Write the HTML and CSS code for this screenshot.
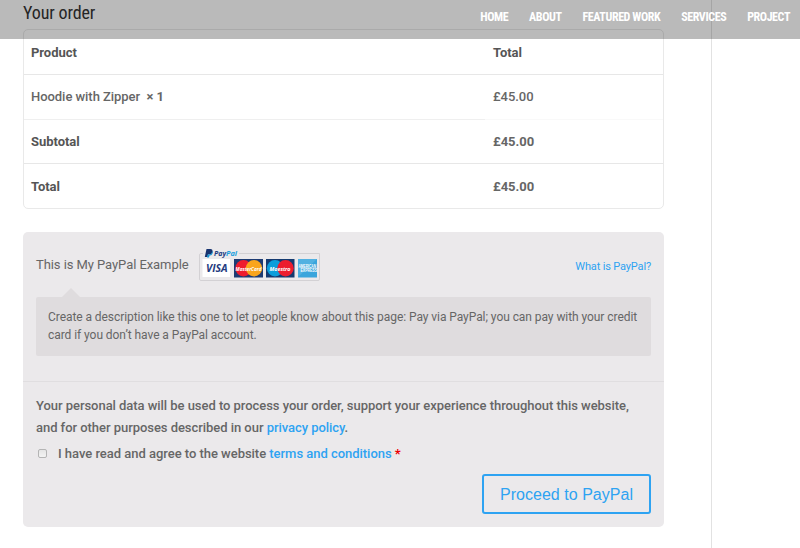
FILE: index.html
```html
<!DOCTYPE html>
<html lang="en">
<head>
<meta charset="utf-8">
<title>Checkout</title>
<link rel="stylesheet" href="styles.css">
</head>
<body>
<header class="site-header">
  <nav class="nav"><a>HOME</a><a>ABOUT</a><a>FEATURED WORK</a><a>SERVICES</a><a>PROJECT</a></nav>
</header>
<div class="page">
  <main class="content">
    <h3 class="heading"><span>Your order</span></h3>
    <div class="order">
      <div class="row head"><span>Product</span><span>Total</span></div>
      <div class="row item"><span>Hoodie with Zipper&nbsp; <b>× 1</b></span><span class="price">£45.00</span></div>
      <div class="row subtotal"><span>Subtotal</span><span class="price">£45.00</span></div>
      <div class="row total"><span>Total</span><span class="price">£45.00</span></div>
    </div>
    <section class="payment">
      <div class="methods">
        <div class="method">
          <span class="method-name">This is My PayPal Example</span>
          <svg class="cards" width="122" height="34" viewBox="0 0 122 34">
            <path d="M4 5.500H2Q.5 5.500 .5 7V31Q.5 32.500 2 32.500H119Q120.500 32.500 120.500 31V5.500H40" fill="none" stroke="#d3d1d4"/>
            <path d="M7.500 1H11.500Q14 1 13.500 4Q13 6.500 10 6.500H9L8.500 9H5.800Z" fill="#17336f"/>
            <path d="M13.300 3Q14.300 4 13.300 6Q12.500 7.500 10.500 7.500L10 9.500H8L8.700 6.500H10Q12.700 6.500 13.300 3Z" fill="#1595d3"/>
            <text class="brand" x="15" y="8" textLength="12" lengthAdjust="spacingAndGlyphs" fill="#213b80">Pay</text>
            <text class="brand" x="27" y="8" textLength="11" lengthAdjust="spacingAndGlyphs" fill="#1aa0dd">Pal</text>
            <rect x="3.500" y="11" width="27.500" height="18" fill="#fff"/>
            <text class="visa" x="7" y="23.500" textLength="21.500" lengthAdjust="spacingAndGlyphs">VISA</text>
            <rect x="35" y="11" width="29" height="18.500" fill="#1d3b73"/>
            <circle cx="44.500" cy="20.300" r="8.200" fill="#ee1c2e"/>
            <circle cx="55" cy="20.300" r="8.200" fill="#faa51c"/>
            <text class="card-name" x="36.500" y="22.500" textLength="26" lengthAdjust="spacingAndGlyphs">MasterCard</text>
            <rect x="67" y="11" width="28.500" height="18.500" fill="#143a70"/>
            <circle cx="76" cy="20.300" r="8.200" fill="#0b9edb"/>
            <circle cx="86.500" cy="20.300" r="8.200" fill="#ec1c2e"/>
            <text class="card-name" x="70.500" y="22.500" textLength="21" lengthAdjust="spacingAndGlyphs">Maestro</text>
            <rect x="99" y="11" width="19" height="18.500" fill="#3aa5dc"/>
            <path d="M99 11H118L99 29Z" fill="#65bce6" opacity=".55"/>
            <text class="amex" x="99.500" y="20" textLength="17.500" lengthAdjust="spacingAndGlyphs">AMERICAN</text>
            <text class="amex" x="101.500" y="24" textLength="16.500" lengthAdjust="spacingAndGlyphs">EXPRESS</text>
          </svg>
          <a class="about"><span>What is PayPal?</span></a>
        </div>
        <div class="description"><p>Create a description like this one to let people know about this page: Pay via PayPal; you can pay with your credit</p><p>card if you don’t have a PayPal account.</p></div>
      </div>
      <div class="place">
        <p class="privacy"><span>Your personal data will be used to process your order, support your experience throughout this website,</span><br><span>and for other purposes described in our <a>privacy policy</a>.</span></p>
        <label class="terms"><i class="checkbox"></i><span>I have read and agree to the website <a>terms and conditions</a> <em>*</em></span></label>
        <button class="pay">Proceed to PayPal</button>
      </div>
    </section>
  </main>
</div>
</body>
</html>
```
FILE: styles.css
```css
* { box-sizing: border-box; }
body { margin: 0; width: 800px; height: 548px; overflow: hidden; background: #fff; color: #666; font: 500 13px/22px Roboto, sans-serif; letter-spacing: -.045px; }
p { margin: 0; }
a { color: #2ea3f2; }
.site-header { position: absolute; inset: 0 0 auto; height: 39px; z-index: 2; background: rgba(0, 0, 0, .27); }
.nav { display: flex; justify-content: flex-end; gap: 20.900px; padding: 6px 10px 0 0; font: 700 12px/22px "Roboto Condensed", Roboto, sans-serif; font-stretch: condensed; letter-spacing: -.4px; }
.nav a { color: #fff; white-space: nowrap; }
.page { width: 712px; height: 548px; border-right: 1px solid #e2e2e2; padding-left: 23px; }
.content { width: 641px; }
.heading { margin: 0; height: 29px; padding-top: 2px; color: #333; font: 400 18px/22px "Roboto Condensed", Roboto, sans-serif; font-stretch: condensed; letter-spacing: -.13px; }
.order { height: 180px; border: 1px solid #e9e9e9; border-radius: 5px; display: grid; grid-template-rows: 44px 45px 44px 45px; }
.row { display: grid; grid-template-columns: 462px 1fr; align-items: center; padding-left: 7px; border-top: 1px solid #e7e7e7; font-weight: 700; color: #555; }
.row.head { border-top: 0; padding-top: 2px; }
.row.item { font-weight: 500; color: #666; }
.row.subtotal { border-top: 0; padding-top: 1px; background: linear-gradient(90deg, #efefef 461px, #f9f9f9 461px) top / 100% 1px no-repeat; }
.row.total { padding-top: 1px; }
.row .price { color: #666; }
.payment { margin-top: 23px; height: 295px; border-radius: 5px; background: #ebe9eb; }
.methods { height: 150px; padding: 14px 13px 0; border-bottom: 1px solid #e0dee0; }
.method { display: flex; height: 39px; }
.method-name { width: 163px; padding-top: 8px; font-weight: 400; letter-spacing: -.07px; white-space: nowrap; }
.cards { margin-top: 2px; flex: none; }
.brand { font: italic 700 7px "Open Sans", sans-serif; }
.visa { font: italic 700 10px "Open Sans", sans-serif; fill: #253b80; }
.card-name { font: italic 700 6px "Open Sans", sans-serif; fill: #fff; }
.amex { font: 700 4.500px "Liberation Sans", sans-serif; fill: #fff; }
.about { margin-left: auto; padding-top: 10px; font-size: 11px; font-weight: 400; letter-spacing: -.15px; white-space: nowrap; }
.description { position: relative; margin-top: 12px; height: 59px; padding: 11px 12px; border-radius: 2px; background: #dfdcde; font-size: 12px; font-weight: 400; line-height: 18px; letter-spacing: -.063px; white-space: nowrap; }
.description::before { content: ""; position: absolute; left: 26px; top: -9px; border: 9px solid transparent; border-top: 0; border-bottom-color: #dfdcde; }
.place { display: flex; flex-direction: column; padding: 13px; }
.privacy { white-space: nowrap; height: 44px; }
.terms { display: flex; align-items: center; margin-top: 4px; height: 22px; letter-spacing: -.03px; }
.checkbox { width: 9px; height: 9px; margin: -2px 11px 0 2px; border: 1px solid #b4b4b4; border-radius: 2px; background: linear-gradient(#e5e5e5, #f3f3f3); }
.terms em { color: #e00; font-style: normal; font-weight: 700; }
.pay { align-self: flex-end; margin-top: 9px; width: 169px; height: 40px; padding: 1px 0 0; border: 2px solid #2ea3f2; border-radius: 3px; background: transparent; color: #2ea3f2; font: 400 16px "Liberation Sans", sans-serif; letter-spacing: .03px; }
```
